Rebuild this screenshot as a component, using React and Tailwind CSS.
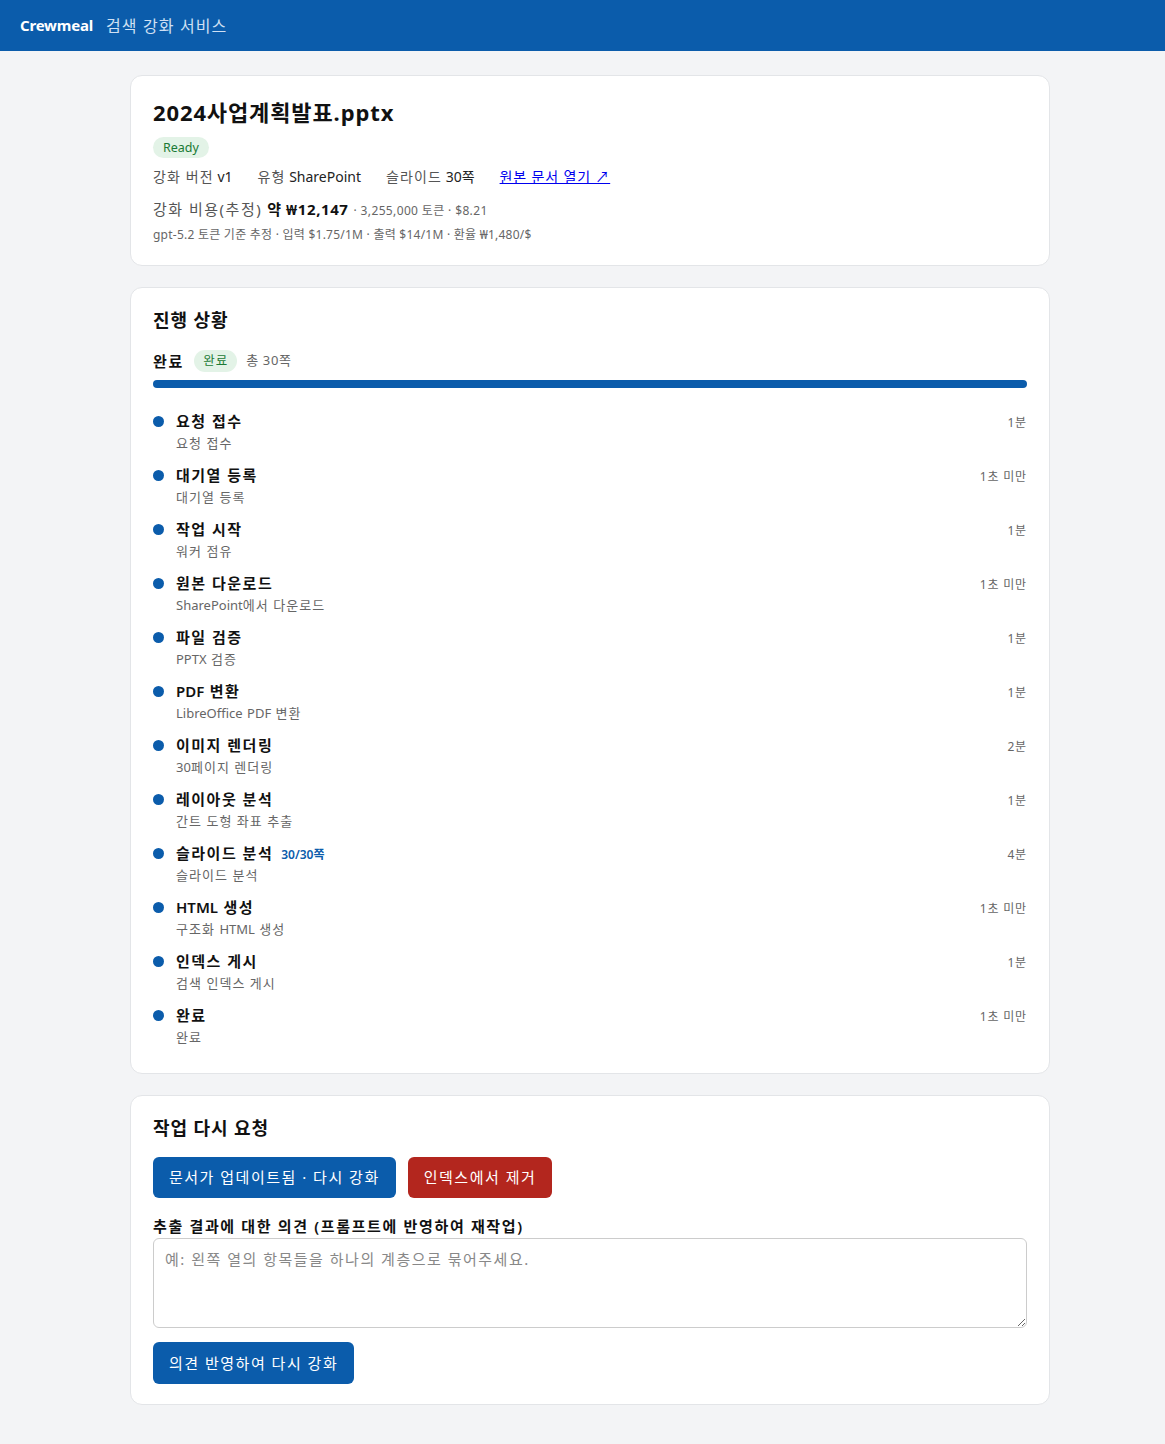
const steps = [
  { title: '요청 접수', sub: '요청 접수', time: '1분' },
  { title: '대기열 등록', sub: '대기열 등록', time: '1초 미만' },
  { title: '작업 시작', sub: '워커 점유', time: '1분' },
  { title: '원본 다운로드', sub: 'SharePoint에서 다운로드', time: '1초 미만' },
  { title: '파일 검증', sub: 'PPTX 검증', time: '1분' },
  { title: 'PDF 변환', sub: 'LibreOffice PDF 변환', time: '1분' },
  { title: '이미지 렌더링', sub: '30페이지 렌더링', time: '2분' },
  { title: '레이아웃 분석', sub: '간트 도형 좌표 추출', time: '1분' },
  { title: '슬라이드 분석', sub: '슬라이드 분석', time: '4분', extra: '30/30쪽' },
  { title: 'HTML 생성', sub: '구조화 HTML 생성', time: '1초 미만' },
  { title: '인덱스 게시', sub: '검색 인덱스 게시', time: '1분' },
  { title: '완료', sub: '완료', time: '1초 미만' },
]

// Latin runs keep normal spacing; hangul gets the parent's tracking
function Ko({ text }) {
  return text.split(/([A-Za-z0-9]+)/).map((part, i) =>
    /^[A-Za-z0-9]+$/.test(part)
      ? <span key={i} className="tracking-normal">{part}</span>
      : part
  )
}

function Card({ children, className = '' }) {
  return (
    <div className={`rounded-xl border border-[#e3e5e8] bg-white px-[22px] ${className}`}>
      {children}
    </div>
  )
}

export default function App() {
  return (
    <div
      className="min-h-[1444px] bg-[#f3f4f6] text-[#111]"
      style={{ fontFamily: '"Noto Sans", "Noto Sans CJK KR", sans-serif' }}
    >
      {/* Header */}
      <div className="flex h-[51px] items-center gap-[13px] bg-[#0b5cab] px-5">
        <span className="text-[15px] font-bold tracking-[-0.2px] text-white">Crewmeal</span>
        <span className="text-[16px] tracking-[0.07em] text-[#cfe0f4]">검색 강화 서비스</span>
      </div>

      <div className="ml-[130px] flex w-[920px] flex-col gap-[21px] pt-6 pb-10">
        {/* Document card */}
        <Card className="pt-[20px] pb-[21px]">
          <h1 className="text-[22px] font-bold leading-[32px] tracking-[0.04em]">2024사업계획발표.pptx</h1>
          <div className="mt-[9px] flex">
            <span className="rounded-full bg-[#e3f3e7] px-[10px] py-[2px] text-[12.5px] leading-[17px] text-[#1b7a35]">
              Ready
            </span>
          </div>
          <div className="mt-[9px] flex items-center gap-[25px] text-[14px] leading-[20px] text-[#555]">
            <span><span className="tracking-[0.08em]">강화 버전</span> <span className="text-[#222]">v1</span></span>
            <span><span className="tracking-[0.08em]">유형</span>  <span className="text-[#222]">SharePoint</span></span>
            <span><span className="tracking-[0.08em]">슬라이드</span> <span className="text-[#222]">30쪽</span></span>
            <a href="#" className="tracking-[0.06em] text-[#0000ee] underline">원본 문서 열기 ↗</a>
          </div>
          <div className="mt-[11px] flex items-baseline gap-[5px] text-[15px] leading-[22px] text-[#555]">
            <span className="tracking-[0.1em]">강화 비용(추정)</span>
            <span className="font-bold tracking-[0.04em] text-[#111]">약 ₩12,147</span>
            <span className="text-[12px] tracking-[0.03em] text-[#666]">· 3,255,000 토큰 · $8.21</span>
          </div>
          <div className="mt-[4px] text-[12px] leading-[18px] tracking-[0.02em] text-[#666]">
            gpt-5.2 토큰 기준 추정 · 입력 $1.75/1M · 출력 $14/1M · 환율 ₩1,480/$
          </div>
        </Card>

        {/* Progress card */}
        <Card className="pt-[18px] pb-[25px]">
          <h2 className="text-[18px] font-bold leading-[28px] tracking-[0.05em]">진행 상황</h2>
          <div className="mt-[16px] flex h-[22px] items-center">
            <span className="text-[15px] font-bold tracking-[0.12em]">완료</span>
            <span className="ml-[10px] rounded-full bg-[#e3f3e7] px-[9px] py-[3px] text-[12.5px] leading-[16px] tracking-[0.08em] text-[#1b7a35]">완료</span>
            <span className="ml-[9px] text-[13px] tracking-[0.05em] text-[#666]">총 30쪽</span>
          </div>
          <div className="mt-[8px] h-2 rounded-full bg-[#0b5cab]" />
          <div className="mt-[22px] flex flex-col gap-[10px]">
            {steps.map((s) => (
              <div key={s.title} className="flex items-start">
                <span className="mt-[6px] h-[11px] w-[11px] shrink-0 rounded-full bg-[#0b5cab]" />
                <div className="ml-3 flex-1">
                  <div className="flex items-baseline gap-2">
                    <span className="text-[15px] font-semibold leading-[22px] tracking-[0.1em]"><Ko text={s.title} /></span>
                    {s.extra && <span className="text-[12px] font-semibold text-[#0b5cab]">{s.extra}</span>}
                  </div>
                  <div className="text-[13px] leading-[22px] tracking-[0.08em] text-[#666]"><Ko text={s.sub} /></div>
                </div>
                <span className="mt-[4px] text-[12px] tracking-[0.07em] text-[#666]">{s.time}</span>
              </div>
            ))}
          </div>
        </Card>

        {/* Retry card */}
        <Card className="pt-[18px] pb-[20px]">
          <h2 className="text-[18px] font-bold leading-[28px] tracking-[0.05em]">작업 다시 요청</h2>
          <div className="mt-[15px] flex gap-3">
            <button className="h-[41px] rounded-md bg-[#0b5cab] px-4 text-[15px] tracking-[0.1em] text-white">
              문서가 업데이트됨 · 다시 강화
            </button>
            <button className="h-[41px] rounded-md bg-[#b3261e] px-4 text-[15px] tracking-[0.1em] text-white">
              인덱스에서 제거
            </button>
          </div>
          <label className="mt-[17px] block text-[15px] font-semibold leading-[22px] tracking-[0.11em]">
            추출 결과에 대한 의견 (프롬프트에 반영하여 재작업)
          </label>
          <textarea
            rows={3}
            placeholder="예: 왼쪽 열의 항목들을 하나의 계층으로 묶어주세요."
            className="mt-px block h-[90px] w-full rounded-md border border-[#ccc] px-[11px] py-[9px] text-[15px] tracking-[0.1em] placeholder:text-[#888]"
          />
          <button className="mt-[14px] h-[42px] rounded-md bg-[#0b5cab] px-4 text-[15px] tracking-[0.1em] text-white">
            의견 반영하여 다시 강화
          </button>
        </Card>
      </div>
    </div>
  )
}
